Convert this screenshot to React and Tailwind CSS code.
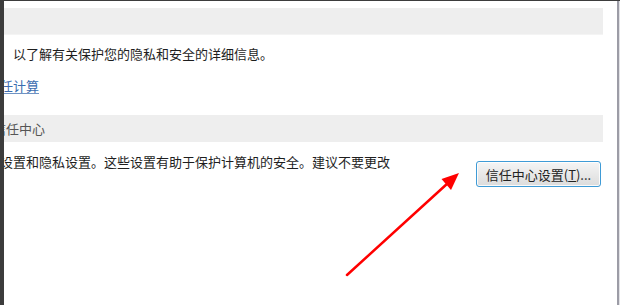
export default function App() {
  const font = { fontFamily: '"Noto Sans CJK SC", "Noto Sans", "Liberation Sans", sans-serif' };
  return (
    <div className="relative w-[620px] h-[305px] bg-white flex flex-col overflow-hidden" style={font}>
      <div className="h-[1px] bg-[#3c3c3c]" />
      <div className="flex flex-1 min-h-0">
        <div className="w-[4px] bg-[#3c3c3c]" />
        <div className="flex-1 min-w-0 overflow-hidden pr-[14px] pt-[7px] text-[13px] text-[#1e1e1e]">
          <div className="h-[27px] bg-[#eeeeee] border-b border-[#f4f4f4]" />
          <p className="mt-[10px] ml-[9px] leading-[18px] whitespace-nowrap">以了解有关保护您的隐私和安全的详细信息。</p>
          <div className="mt-[14px] -ml-[17px] leading-[18px] whitespace-nowrap">
            <a className="text-[#3b6db0] underline underline-offset-2 decoration-[#6f93c4]">信任计算</a>
          </div>
          <div className="mt-[20px] h-[27px] bg-[#eeeeee] flex items-center -ml-0">
            <span className="-ml-[11px] text-[#555555] leading-[18px] whitespace-nowrap">信任中心</span>
          </div>
          <div className="mt-[11px] flex items-start justify-between">
            <p className="-ml-[4px] leading-[18px] whitespace-nowrap">设置和隐私设置。这些设置有助于保护计算机的安全。建议不要更改</p>
            <button className="mt-[8px] mr-[2px] shrink-0 w-[125px] h-[26px] rounded-[3px] border border-[#3f9bd6] bg-gradient-to-b from-[#f5f5f5] to-[#dcdcdc] shadow-[inset_0_0_0_1px_rgba(255,255,255,0.85)] text-[13px] text-[#222222] leading-none flex items-center justify-center whitespace-nowrap">
              信任中心设置(<span className="underline">T</span>)...
            </button>
          </div>
        </div>
        <div className="w-[2px] bg-[#9c9ca6]" />
        <div className="w-[1px] bg-[#e2e2e6]" />
      </div>
      <svg className="absolute inset-0 pointer-events-none" width="620" height="305" viewBox="0 0 620 305">
        <line x1="347" y1="275" x2="448" y2="183" stroke="#ff0000" strokeWidth="2.5" strokeLinecap="round" />
        <polygon points="459,173 451,190 441.5,179" fill="#ff0000" />
      </svg>
    </div>
  );
}
